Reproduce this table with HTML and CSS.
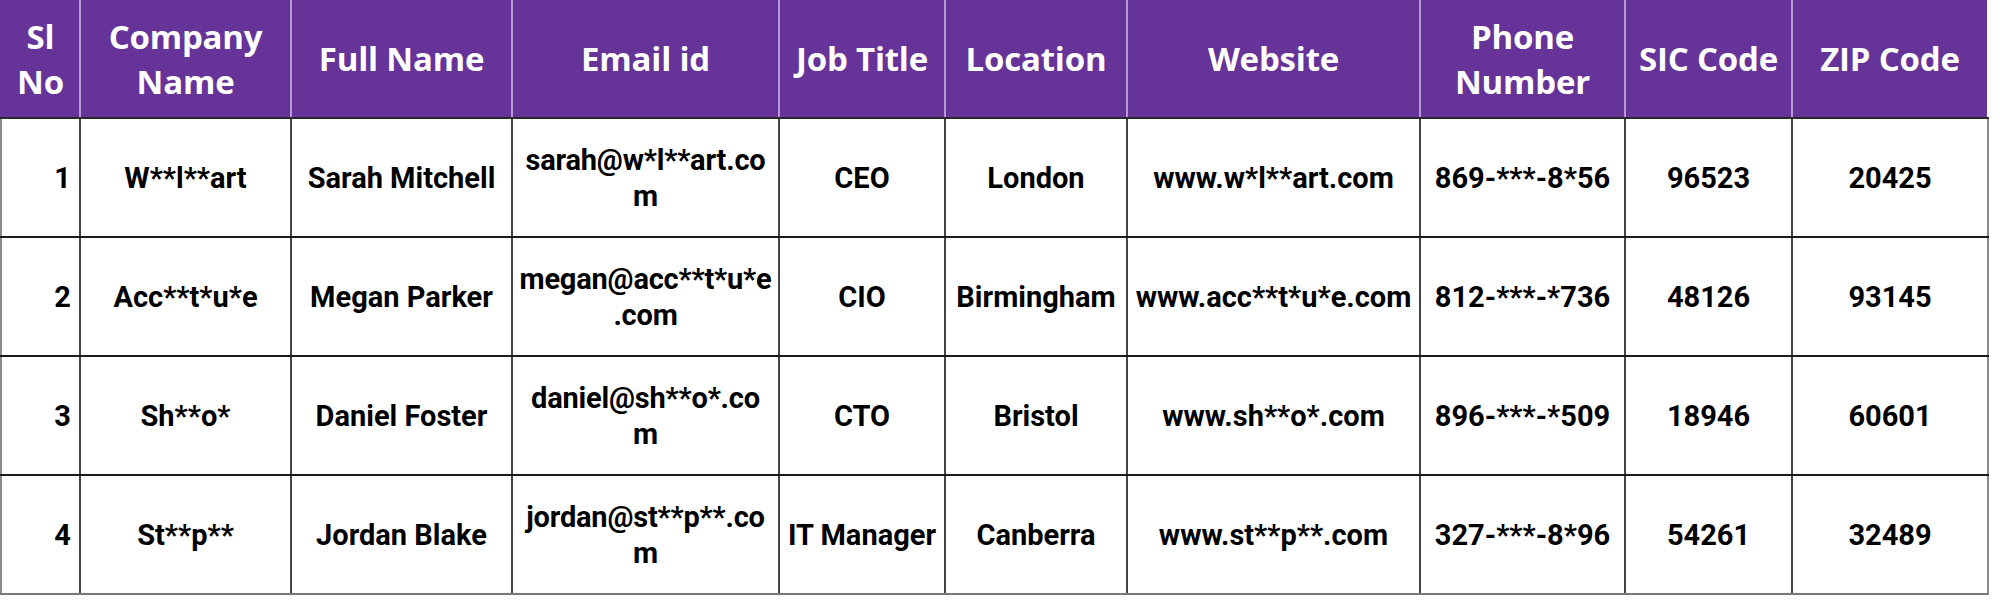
FILE: index.html
```html
<!DOCTYPE html>
<html>
<head>
<meta charset="utf-8">
<link rel="stylesheet" href="styles.css">
</head>
<body>
<table class="leads">
  <colgroup>
    <col class="c-sl"><col class="c-company"><col class="c-name"><col class="c-email"><col class="c-job"><col class="c-loc"><col class="c-web"><col class="c-phone"><col class="c-sic"><col class="c-zip">
  </colgroup>
  <thead>
    <tr>
      <th>Sl No</th>
      <th>Company Name</th>
      <th>Full Name</th>
      <th>Email id</th>
      <th>Job Title</th>
      <th>Location</th>
      <th>Website</th>
      <th>Phone Number</th>
      <th>SIC Code</th>
      <th>ZIP Code</th>
    </tr>
  </thead>
  <tbody>
    <tr>
      <td class="num">1</td>
      <td>W**l**art</td>
      <td>Sarah Mitchell</td>
      <td class="email">sarah@w*l**art.co<br>m</td>
      <td>CEO</td>
      <td>London</td>
      <td>www.w*l**art.com</td>
      <td>869-***-8*56</td>
      <td>96523</td>
      <td>20425</td>
    </tr>
    <tr>
      <td class="num">2</td>
      <td>Acc**t*u*e</td>
      <td>Megan Parker</td>
      <td class="email">megan@acc**t*u*e<br>.com</td>
      <td>CIO</td>
      <td>Birmingham</td>
      <td>www.acc**t*u*e.com</td>
      <td>812-***-*736</td>
      <td>48126</td>
      <td>93145</td>
    </tr>
    <tr>
      <td class="num">3</td>
      <td>Sh**o*</td>
      <td>Daniel Foster</td>
      <td class="email">daniel@sh**o*.co<br>m</td>
      <td>CTO</td>
      <td>Bristol</td>
      <td>www.sh**o*.com</td>
      <td>896-***-*509</td>
      <td>18946</td>
      <td>60601</td>
    </tr>
    <tr>
      <td class="num">4</td>
      <td>St**p**</td>
      <td>Jordan Blake</td>
      <td class="email">jordan@st**p**.co<br>m</td>
      <td>IT Manager</td>
      <td>Canberra</td>
      <td>www.st**p**.com</td>
      <td>327-***-8*96</td>
      <td>54261</td>
      <td>32489</td>
    </tr>
  </tbody>
</table>
</body>
</html>
```
FILE: styles.css
```css
html, body {
  margin: 0;
  padding: 0;
  background: #ffffff;
}

.leads {
  border-collapse: collapse;
  table-layout: fixed;
  width: 1987px;
}

.c-sl { width: 79px; }
.c-company { width: 211px; }
.c-name { width: 221px; }
.c-email { width: 267px; }
.c-job { width: 166px; }
.c-loc { width: 182px; }
.c-web { width: 293px; }
.c-phone { width: 205px; }
.c-sic { width: 167px; }
.c-zip { width: 196px; }

.leads th {
  height: 117px;
  background: #663399;
  color: #ffffff;
  font-family: "Open Sans", "DejaVu Sans", sans-serif;
  font-weight: 700;
  font-size: 33px;
  line-height: 45px;
  letter-spacing: -0.2px;
  text-align: center;
  vertical-align: middle;
  padding: 0 4px;
  border-left: 2px solid #b59ad8;
  border-right: 2px solid #b59ad8;
  border-bottom: 2px solid #2a2a2a;
}

.leads th:first-child { border-left: 2px solid #663399; }
.leads th:last-child { border-right: 2px solid #ffffff; }

.leads td {
  height: 117px;
  color: #000000;
  font-family: Roboto, "Liberation Sans", sans-serif;
  font-weight: 700;
  font-size: 29px;
  line-height: 36px;
  text-align: center;
  vertical-align: middle;
  padding: 0 5px;
  border: 2px solid #444444;
  border-top-color: #1a1a1a;
  border-bottom-color: #1a1a1a;
}

.leads td:first-child { border-left-color: #8a8a8a; }
.leads td:last-child { border-right-color: #8a8a8a; }
.leads tbody tr:last-child td { border-bottom-color: #7a7a7a; }

.leads td.num {
  text-align: right;
  padding-right: 8px;
}

.leads td.email {
  padding: 0;
  letter-spacing: -0.2px;
  white-space: nowrap;
}
```
